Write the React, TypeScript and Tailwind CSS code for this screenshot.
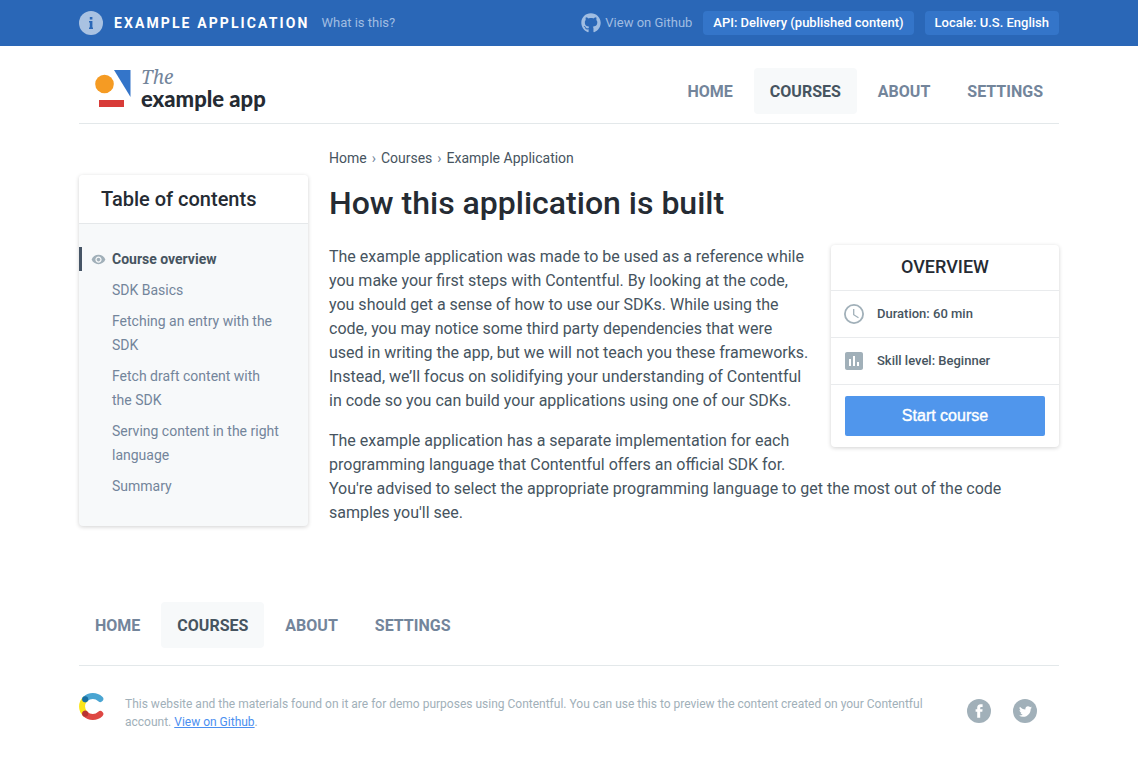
import React from "react";
import { FaGithub, FaTwitter } from "react-icons/fa";
import { MdInsertChart, MdRemoveRedEye } from "react-icons/md";

const navItems = ["Home", "Courses", "About", "Settings"];

const lessons = [
  "SDK Basics",
  "Fetching an entry with the SDK",
  "Fetch draft content with the SDK",
  "Serving content in the right language",
  "Summary",
];

function MainNav({ label }: { label: string }) {
  return (
    <nav aria-label={label} className="flex gap-[5px]">
      {navItems.map((item) => (
        <a
          key={item}
          href="#"
          aria-current={item === "Courses" ? "page" : undefined}
          className={
            item === "Courses"
              ? "rounded bg-[#f7f9fa] px-4 pb-[10px] pt-3 font-bold uppercase leading-6 text-[#465460]"
              : "rounded px-4 pb-[10px] pt-3 font-bold uppercase leading-6 text-[#73859b]"
          }
        >
          {item}
        </a>
      ))}
    </nav>
  );
}

function TopBar() {
  return (
    <div className="bg-[#2a67b7]">
      <div className="mx-auto flex h-[46px] max-w-[980px] items-center justify-between text-[13px] leading-6">
        <div className="flex items-center">
          <svg className="size-6" viewBox="0 0 24 24" aria-hidden="true">
            <circle cx="12" cy="12" r="12" fill="#a9c2e2" />
            <path
              d="M10.800 6h2.600v2.400h-2.600zM10 10h3.400v6.600h.6V18h-4v-1.400h.8v-5.200H10z"
              fill="#2a67b7"
            />
          </svg>
          <strong className="ml-[11px] text-sm font-bold uppercase tracking-[0.15em] text-white">
            Example Application
          </strong>
          <a href="#" className="ml-3 text-[#a0bde2]">
            What is this?
          </a>
        </div>
        <div className="flex items-center">
          <a href="#" className="flex items-center gap-1 text-[#a0bde2]">
            <FaGithub className="size-5" />
            View on Github
          </a>
          <button className="ml-[11px] h-6 rounded bg-[#3475c9] px-[10px] font-medium text-white">
            API: Delivery (published content)
          </button>
          <button className="ml-[11px] h-6 rounded bg-[#3475c9] px-[10px] font-medium text-white">
            Locale: U.S. English
          </button>
        </div>
      </div>
    </div>
  );
}

function Logo() {
  return (
    <a href="#" className="flex items-center gap-[10px] pl-4">
      <svg className="h-[38px] w-9" viewBox="0 0 36 38" aria-hidden="true">
        <circle cx="9.5" cy="15" r="9.3" fill="#f59b23" />
        <path d="M19 1h16.500v27z" fill="#3475c9" />
        <path d="M4 31h25v7H4z" fill="#d83b38" />
      </svg>
      <span className="flex flex-col">
        <span className="font-['Noto_Serif','DejaVu_Serif','Liberation_Serif',serif] text-[19px] italic leading-[22px] text-[#73859b]">
          The
        </span>
        <span className="font-['Lato',sans-serif] text-[22px] font-black leading-[22px] text-[#252b33]">
          example app
        </span>
      </span>
    </a>
  );
}

function Contents() {
  return (
    <aside className="mt-[51px] w-[229px] shrink-0 self-start overflow-hidden rounded bg-[#f7f9fa] shadow-[0_1px_4px_rgba(0,0,0,0.18)]">
      <h2 className="border-b border-[#e5e8ea] bg-white px-[22px] py-3 text-xl font-medium leading-6 text-[#252b33]">
        Table of contents
      </h2>
      <ul className="flex flex-col gap-[7px] pb-7 pt-[23px] text-sm leading-6">
        <li>
          <a
            href="#"
            className="flex items-center border-l-[3px] border-[#465566] pl-[9px] font-bold text-[#465460]"
          >
            <MdRemoveRedEye className="mr-[6px] size-[15px] text-[#a1b0b9]" />
            Course overview
          </a>
        </li>
        {lessons.map((lesson) => (
          <li key={lesson} className="pl-[33px] pr-[26px]">
            <a href="#" className="text-[#73859b]">
              {lesson}
            </a>
          </li>
        ))}
      </ul>
    </aside>
  );
}

function Overview() {
  return (
    <aside className="float-right mb-5 ml-[22px] w-[228px] rounded bg-white text-[13px] font-medium text-[#465460] shadow-[0_1px_4px_rgba(0,0,0,0.18)]">
      <h2 className="pb-[11px] pt-[10px] text-center text-lg font-medium uppercase leading-6 text-[#252b33]">
        Overview
      </h2>
      <p className="flex h-[47px] items-center gap-[13px] border-t border-[#e9ebed] pl-[13px]">
        <svg className="size-5" viewBox="0 0 20 20" fill="none" stroke="#a1b0b9" aria-hidden="true">
          <circle cx="10" cy="10" r="9.100" strokeWidth="1.800" />
          <path d="M9.700 5v5.700l4.800 3" strokeWidth="1.300" />
        </svg>
        Duration: 60 min
      </p>
      <p className="flex h-[47px] items-center gap-[11px] border-t border-[#e9ebed] pl-[11px]">
        <MdInsertChart className="size-6 text-[#a1b0b9]" />
        Skill level: Beginner
      </p>
      <div className="border-t border-[#e9ebed] px-[14px] py-[11px]">
        <button className="block h-10 w-full rounded-[2px] bg-[#5096ec] font-['Liberation_Sans',sans-serif] text-base text-white [-webkit-text-stroke:0.4px_white]">
          Start course
        </button>
      </div>
    </aside>
  );
}

function Footer() {
  return (
    <footer>
      <div className="border-b border-[#e3e8ea] pb-[17px]">
        <MainNav label="Footer" />
      </div>
      <div className="flex pb-8 pt-[27px]">
        <svg className="h-7 w-[25px] shrink-0" viewBox="0 0 25 28" fill="none" strokeWidth="6" strokeLinecap="round" aria-hidden="true">
          <path d="M6.200 6.200C2 10.300 2 16.700 6.200 20.800" stroke="#fae51b" />
          <path d="M6.200 6.200C10.500 2 17 2 21.300 6" stroke="#4aa5d2" />
          <path d="M6.200 20.800C10.500 25 17 25 21.300 21" stroke="#de4743" />
          <circle cx="6.200" cy="6.200" r="3" fill="#186ea0" />
          <circle cx="6.200" cy="20.800" r="3" fill="#b83432" />
        </svg>
        <p className="ml-[21px] mt-[2px] max-w-[805px] flex-1 text-xs leading-[18px] text-[#a1b0b9]">
          This website and the materials found on it are for demo purposes using
          Contentful. You can use this to preview the content created on your
          Contentful account.{" "}
          <a href="#" className="text-[#4b8ff0] underline">
            View on Github
          </a>
          .
        </p>
        <div className="ml-auto mr-[22px] mt-[6px] flex gap-[22px] text-white">
          <a href="#" aria-label="Facebook" className="flex size-6 items-center justify-center rounded-full bg-[#a1b0b9]">
            <svg className="size-6" viewBox="0 0 24 24" fill="currentColor" aria-hidden="true">
              <path d="M10.200 18.800v-6H8.600v-2.500h1.600V8.800c0-2.100 1.200-3.500 3.400-3.500h2v2.600h-1.300c-.8 0-1.100.4-1.100 1.100v1.300h2.400l-.3 2.500h-2.100v6z" />
            </svg>
          </a>
          <a href="#" aria-label="Twitter" className="flex size-6 items-center justify-center rounded-full bg-[#a1b0b9]">
            <FaTwitter className="size-[13px]" />
          </a>
        </div>
      </div>
    </footer>
  );
}

export default function App() {
  return (
    <div className="min-h-screen bg-white font-['Roboto',sans-serif]">
      <TopBar />
      <div className="mx-auto max-w-[980px]">
        <header className="flex items-start justify-between border-b border-[#e3e8ea] pb-[9px] pt-5">
          <Logo />
          <div className="pt-[2px]">
            <MainNav label="Main" />
          </div>
        </header>
        <main className="flex gap-[21px]">
          <Contents />
          <div className="flex-1 pt-[22px] text-[#465460]">
            <nav aria-label="Breadcrumb" className="flex gap-[5px] text-sm leading-6">
              <a href="#">Home</a>
              <span className="text-[#73859b]">›</span>
              <a href="#">Courses</a>
              <span className="text-[#73859b]">›</span>
              <a href="#">Example Application</a>
            </nav>
            <h1 className="mt-[13px] text-[32px] font-medium leading-10 text-[#252b33]">
              How this application is built
            </h1>
            <div className="mt-[22px] leading-6">
              <Overview />
              <p>
                The example application was made to be used as a reference while
                you make your first steps with Contentful. By looking at the
                code, you should get a sense of how to use our SDKs. While using
                the code, you may notice some third party dependencies that were
                used in writing the app, but we will not teach you these
                frameworks. Instead, we’ll focus on solidifying your
                understanding of Contentful in code so you can build your
                applications using one of our SDKs.
              </p>
              <p className="mt-4">
                The example application has a separate implementation for each
                programming language that Contentful offers an official SDK for.
                You're advised to select the appropriate programming language to
                get the most out of the code samples you'll see.
              </p>
            </div>
          </div>
        </main>
        <div className="pt-[76px]">
          <Footer />
        </div>
      </div>
    </div>
  );
}
